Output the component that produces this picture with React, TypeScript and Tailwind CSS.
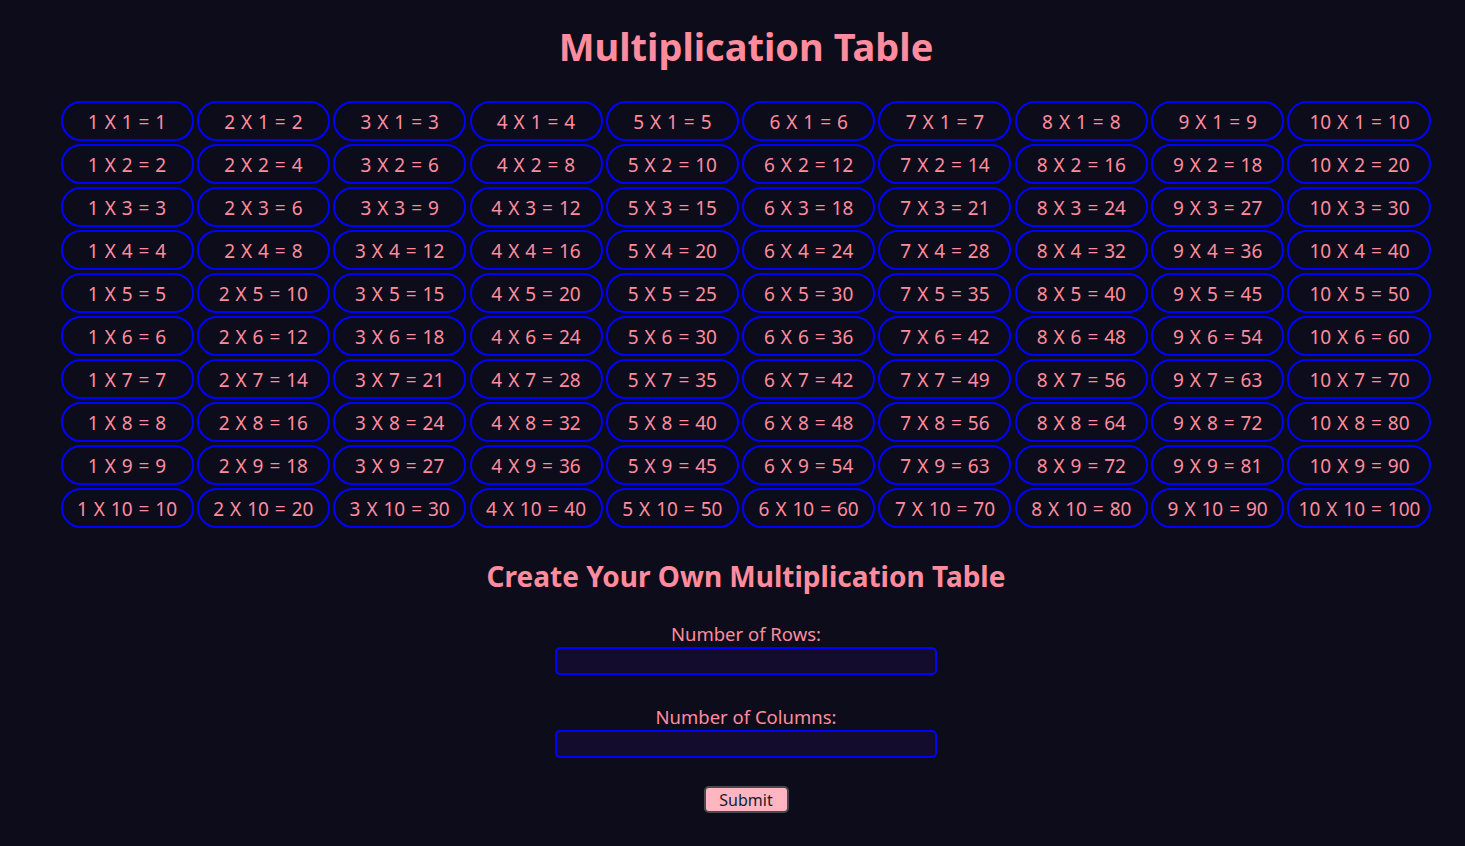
import { useState } from 'react';

const nums = [1, 2, 3, 4, 5, 6, 7, 8, 9, 10];

export default function App() {
  const [rows, setRows] = useState('');
  const [cols, setCols] = useState('');

  return (
    <div className="min-h-[846px] bg-[#0d0c1b] text-[#ff8c9e] font-['Noto_Sans',sans-serif] pl-[27px]">
      <div className="flex flex-col items-center">
        <h1 className="text-[38px] font-bold leading-none mt-[27px] mb-[36px]">Multiplication Table</h1>

        <div className="grid grid-cols-[repeat(9,133px)_144px] gap-x-[3.33px] gap-y-[3px]">
          {nums.map(r =>
            nums.map(c => (
              <div
                key={`${r}-${c}`}
                className="h-[40px] flex items-center justify-center pt-[2px] border-2 border-[#0000ff] rounded-[20px] text-[19px] [word-spacing:1px] whitespace-nowrap"
              >
                {c} X {r} = {c * r}
              </div>
            ))
          )}
        </div>

        <h2 className="text-[28px] font-bold leading-none mt-[34px] mb-[31px]">Create Your Own Multiplication Table</h2>

        <form className="flex flex-col items-center" onSubmit={e => e.preventDefault()}>
          <label className="text-[18.5px] leading-[26px]">Number of Rows:</label>
          <input
            value={rows}
            onChange={e => setRows(e.target.value)}
            className="w-[382px] h-[28px] bg-[#130c2c] border-2 border-[#0000ff] rounded-[5px] mb-[29px]"
          />
          <label className="text-[18.5px] leading-[26px]">Number of Columns:</label>
          <input
            value={cols}
            onChange={e => setCols(e.target.value)}
            className="w-[382px] h-[28px] bg-[#130c2c] border-2 border-[#0000ff] rounded-[5px] mb-[28px]"
          />
          <button className="w-[85px] h-[27px] bg-[#ffb6c1] border-2 border-[#4a4a4a] rounded-[5px] text-[#1a1a2e] text-[16px] leading-none">
            Submit
          </button>
        </form>
      </div>
    </div>
  );
}
